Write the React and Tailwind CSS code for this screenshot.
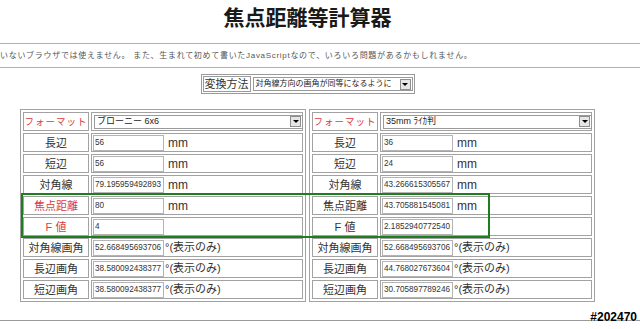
const SANS = "font-['Liberation_Sans','Noto_Sans_CJK_JP',sans-serif]";

// dropdown arrow used by both select boxes
const Arrow = () => (
  <div className="mr-[1px] flex h-[11px] w-[11px] shrink-0 items-center justify-center border border-[#8e8e8e] bg-[#e6e6e6]">
    <div className="h-0 w-0 border-x-[3px] border-t-[3px] border-x-transparent border-t-black" />
  </div>
);

const FakeSelect = ({ text, width, size = "text-[8px]" }) => (
  <div
    className={`flex h-[14px] items-center justify-between border border-[#9a9a9a] bg-white pl-[2px] leading-none text-[#222] ${size} ${width}`}
  >
    <span className="whitespace-nowrap">{text}</span>
    <Arrow />
  </div>
);

const Field = ({ value }) => (
  <input
    readOnly
    value={value}
    className="h-[16px] w-[71px] shrink-0 border border-[#b4b4b4] bg-white px-[1px] text-[8.2px] leading-none text-[#333] outline-none"
  />
);

const Row = ({ label, labelClass = "text-[#333] text-[11px]", children }) => (
  <tr>
    <td className={`h-[19px] overflow-hidden whitespace-nowrap border border-[#a2a2a2] p-0 text-center leading-[14px] ${labelClass}`}>
      {label}
    </td>
    <td className="h-[19px] border border-[#a2a2a2] p-0 pl-[1px] leading-none">
      <div className="flex h-[17px] items-center">{children}</div>
    </td>
  </tr>
);

const Unit = ({ value, unit = "mm" }) =>
  unit === "mm" ? (
    <>
      <Field value={value} />
      <span className="ml-[4px] text-[12px] leading-none text-[#333]">mm</span>
    </>
  ) : (
    <>
      <Field value={value} />
      <span className="ml-[1px] text-[11px] leading-none text-[#333]">°(表示のみ)</span>
    </>
  );

const CalcTable = ({ data, highlight }) => {
  const red = "text-[#dd3b3b] text-[11px]";
  const plain = "text-[#333] text-[11px]";
  return (
    <table className="w-[286px] table-fixed border-separate border-spacing-[2px] border border-[#a2a2a2]">
      <colgroup>
        <col className="w-[66px]" />
        <col />
      </colgroup>
      <tbody>
        <Row label="フォーマット" labelClass="text-[#dd3b3b] text-[9.5px] tracking-[1px]">
          <div className="ml-[1px]">
            <FakeSelect text={data.format} width="w-[209px]" size="text-[9px]" />
          </div>
        </Row>
        <Row label="長辺">
          <Unit value={data.long} />
        </Row>
        <Row label="短辺">
          <Unit value={data.short} />
        </Row>
        <Row label="対角線">
          <Unit value={data.diag} />
        </Row>
        <Row label="焦点距離" labelClass={highlight ? red : plain}>
          <Unit value={data.focal} />
        </Row>
        <Row label="F 値" labelClass={highlight ? red : plain}>
          <Field value={data.fnum} />
        </Row>
        <Row label="対角線画角">
          <Unit value={data.diagAngle} unit="deg" />
        </Row>
        <Row label="長辺画角">
          <Unit value={data.longAngle} unit="deg" />
        </Row>
        <Row label="短辺画角">
          <Unit value={data.shortAngle} unit="deg" />
        </Row>
      </tbody>
    </table>
  );
};

const brownie = {
  format: "ブローニー 6x6",
  long: "56",
  short: "56",
  diag: "79.195959492893",
  focal: "80",
  fnum: "4",
  diagAngle: "52.668495693706",
  longAngle: "38.580092438377",
  shortAngle: "38.580092438377",
};

const leica = {
  format: "35mm ﾗｲｶ判",
  long: "36",
  short: "24",
  diag: "43.266615305567",
  focal: "43.705881545081",
  fnum: "2.1852940772540",
  diagAngle: "52.668495693706",
  longAngle: "44.768027673604",
  shortAngle: "30.705897789246",
};

export default function App() {
  return (
    <div className={`relative h-[329px] w-[640px] overflow-hidden bg-white ${SANS}`}>
      {/* title */}
      <div className="h-[43px] w-[615px] pt-[5px] text-center">
        <h1 className="text-[21px] leading-[26px] font-bold text-[#1a1a1a]">焦点距離等計算器</h1>
      </div>

      {/* scrolling notice */}
      <div className="flex h-[25px] items-center overflow-hidden border-y border-[#b0b0b0]">
        <p className="whitespace-nowrap text-[8px] tracking-[0.7px] text-[#555]">
          いないブラウザでは使えません。 また、生まれて初めて書いたJavaScriptなので、いろいろ問題があるかもしれません。
        </p>
      </div>

      {/* conversion method */}
      <div className="flex w-[615px] justify-center pt-[6px]">
        <div className="flex items-center gap-[2px] border border-[#9a9a9a] p-[1px]">
          <div className="flex h-[16px] items-center border border-[#9a9a9a] px-[1px] text-[11px] text-[#333]">
            変換方法
          </div>
          <FakeSelect text="対角線方向の画角が同等になるように" width="w-[160px]" />
        </div>
      </div>

      {/* tables */}
      <div className="mt-[15px] flex w-[615px] justify-center gap-[3px]">
        <CalcTable data={brownie} highlight />
        <CalcTable data={leica} />
      </div>

      <div className="mt-[18px] border-t border-[#9a9a9a]" />

      {/* highlight frame */}
      <div className="absolute left-[21px] top-[193px] h-[45px] w-[469px] border-2 border-[#1f7d1f]" />

      {/* watermark */}
      <div className="absolute bottom-[3px] right-[3px] text-[12px] font-bold text-black [text-shadow:0_0_1px_#fff,0_0_1px_#fff]">
        #202470
      </div>
    </div>
  );
}
